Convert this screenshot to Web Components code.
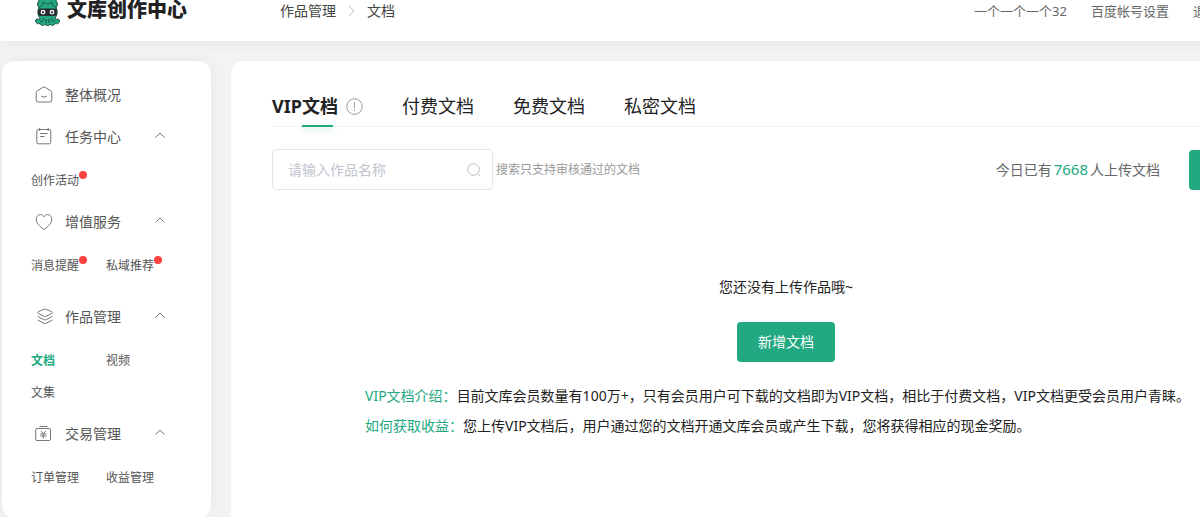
<!DOCTYPE html>
<html lang="zh-CN">
<head>
<meta charset="utf-8">
<meta name="viewport" content="width=device-width, initial-scale=1">
<title>文库创作中心</title>
<style>
  html { scrollbar-width: none; background: #f3f3f3; }
  body {
    margin: 0;
    font: 14px/20px "Noto Sans", "Noto Sans CJK SC", sans-serif;
    color: #555;
    --brand: #22a982;
  }
</style>
</head>
<body>
<studio-page>
  <studio-header slot="header"></studio-header>
  <studio-sidebar slot="side">
    <nav-group label="整体概况" icon="home" flat></nav-group>
    <nav-group label="任务中心" icon="task">
      <nav-item dot>创作活动</nav-item>
    </nav-group>
    <nav-group label="增值服务" icon="heart">
      <nav-item dot>消息提醒</nav-item>
      <nav-item dot>私域推荐</nav-item>
    </nav-group>
    <nav-group label="作品管理" icon="layers" spaced>
      <nav-item active>文档</nav-item>
      <nav-item>视频</nav-item>
      <nav-item>文集</nav-item>
    </nav-group>
    <nav-group label="交易管理" icon="money">
      <nav-item>订单管理</nav-item>
      <nav-item>收益管理</nav-item>
    </nav-group>
  </studio-sidebar>
  <doc-panel>
    <doc-tabs slot="tabs"></doc-tabs>
    <doc-toolbar slot="toolbar"></doc-toolbar>
    <doc-empty></doc-empty>
  </doc-panel>
</studio-page>

<script>
const ICONS = {
  home: '<path d="M1.2 6.4Q1.2 5.4 2.1 4.9L7.9 1.3Q9 .7 10.1 1.3L15.9 4.9Q16.8 5.4 16.8 6.4V14Q16.8 16 14.8 16H3.2Q1.2 16 1.2 14Z"/><path d="M6.2 10Q9 12.4 11.8 10"/>',
  task: '<path d="M4.6 1.5H3.3Q1.8 1.5 1.8 3V14.3Q1.8 15.8 3.3 15.8H14.3Q15.8 15.8 15.8 14.3V3Q15.8 1.5 14.3 1.5H13.2M4.6 1.5H13.2M4.6 0V3M13.2 0V3M5 5.5H12.5M5 8.5H9.5"/>',
  heart: '<path d="M9 16.4C7.2 15.4 1.2 11 1.2 6.3C1.2 3.5 3.1 1.6 5.4 1.6C7 1.6 8.3 2.4 9 3.8C9.7 2.4 11 1.6 12.6 1.6C14.9 1.6 16.8 3.5 16.8 6.3C16.8 11 10.8 15.4 9 16.4Z"/>',
  layers: '<path d="M9.2 1.2Q10 .8 10.8 1.2L16.8 3.8Q18 4.6 16.8 5.4L10.8 8.4Q10 8.8 9.2 8.4L3.2 5.4Q2 4.6 3.2 3.8ZM2.6 8.4L9.2 11.8Q10 12.2 10.8 11.8L17.4 8.4M2.6 12L9.2 15.4Q10 15.8 10.8 15.4L17.4 12"/>',
  money: '<path d="M4.5 1.5H12.5M2 3.5H14.2Q15.5 3.5 15.5 4.8V14.2Q15.5 15.5 14.2 15.5H2Q.7 15.5 .7 14.2V4.8Q.7 3.5 2 3.5Z"/><path d="M5.8 6L8.3 8.8L10.8 6M5.2 9H11.4M5.2 11H11.4M8.3 8.8V13.3"/>'
};

function define(name, html, setup) {
  const template = document.createElement('template');
  template.innerHTML = html;
  customElements.define(name, class extends HTMLElement {
    constructor() {
      super();
      this.attachShadow({ mode: 'open' }).append(template.content.cloneNode(true));
    }
    connectedCallback() { if (setup) setup(this, this.shadowRoot); }
  });
}

define('studio-page', `
<style>
  :host { display: block; min-width: 1343px; }
  .body { display: grid; grid-template-columns: 209px 1fr; gap: 20px; align-items: start; padding: 20px 2px; }
</style>
<slot name="header"></slot>
<div class="body"><slot name="side"></slot><slot></slot></div>`);

define('studio-header', `
<style>
  :host { display: block; position: relative; background: #fff; box-shadow: 0 2px 16px rgba(0,0,0,.06); }
  header { display: flex; align-items: flex-start; min-height: 41px; padding: 0 124px 0 34px; box-sizing: border-box; line-height: 22px; }
  a { color: inherit; text-decoration: none; }
  .logo { display: flex; width: 246px; gap: 6px; color: #222; font-size: 20px; font-weight: 900; line-height: 20px; }
  .crumbs { display: flex; flex: 1; align-items: center; gap: 12px; color: #444; }
  .user { display: flex; gap: 24px; font-size: 13px; color: #666; }
  svg { display: block; }
</style>
<header>
  <a class="logo" href="#">
    <svg width="27" height="26" viewBox="0 0 27 26" aria-hidden="true">
      <path d="M6 -2H21L23.5 4Q24 6 22 7L23 10V14C22 17 21 18 21 19C22 20 24 18 25.4 20C26 23 23 24.6 21 23.4C20 26 17 26 16.4 24C15 26 12 26 10.6 24C10 26 7 26 6 23.4C4 24.6 1 23 1.6 20C3 18 5 20 6 19C6 18 5 17 4 14V10L5 7Q3 6 3.5 4Z" fill="#22a982" stroke="#1c4f45"/>
      <path d="M5 7C8 7 9 4 9 2M22 7C19 7 18 4 18 2M9 2Q13.5 6 18 2M9.4 18C9.4 21 8 22 6 21.4M12 19V23M15 19V23M17.6 18C17.6 21 19 22 21 21.4" fill="none" stroke="#1c4f45"/>
      <rect x="4" y="8.6" width="19" height="7.4" rx="3" fill="#262a2c"/>
      <circle cx="9" cy="12.2" r="1.8" fill="#444" stroke="#fff" stroke-width="1.2"/><circle cx="18" cy="12.2" r="1.8" fill="#444" stroke="#fff" stroke-width="1.2"/>
    </svg>
    <span>文库创作中心</span>
  </a>
  <nav class="crumbs" aria-label="面包屑">
    <a href="#">作品管理</a>
    <svg width="7" height="12" viewBox="0 0 7 12" fill="none" stroke="#bbb"><path d="M1 1L6 6L1 11"/></svg>
    <span>文档</span>
  </nav>
  <nav class="user" aria-label="帐号"><a href="#">一个一个一个32</a><a href="#">百度帐号设置</a><a href="#">退出</a></nav>
</header>`);

define('studio-sidebar', `
<style>
  :host { display: block; box-sizing: border-box; padding: 13px 0 20px; border-radius: 12px; background: #fff; box-shadow: 0 0 12px rgba(0,0,0,.06); }
</style>
<nav aria-label="主导航"><slot></slot></nav>`);

define('nav-group', `
<style>
  :host { display: block; }
  :host([spaced]) { margin-top: 10px; }
  button { display: flex; align-items: center; width: 100%; height: 42px; padding: 0 46px 0 33px; border: 0; background: none; font: inherit; color: #555; cursor: pointer; }
  .label { flex: 1; margin-left: 12px; text-align: left; }
  svg { display: block; fill: none; stroke: #777; }
  .chevron { margin-bottom: 4px; }
  .items { display: grid; grid-template-columns: 75px 75px; padding: 7px 0 4px 29px; }
  :host([flat]) .chevron, :host([flat]) .items { display: none; }
</style>
<button type="button" aria-expanded="true">
  <svg class="icon" width="18" height="18" viewBox="0 0 18 18" aria-hidden="true"></svg>
  <span class="label"></span>
  <svg class="chevron" width="10" height="6" viewBox="0 0 10 6" aria-hidden="true"><path d="M0.5 5.5L5 1L9.5 5.5"/></svg>
</button>
<div class="items"><slot></slot></div>`, (host, root) => {
  root.querySelector('.label').textContent = host.getAttribute('label');
  root.querySelector('.icon').innerHTML = ICONS[host.getAttribute('icon')];
  if (host.hasAttribute('flat')) root.querySelector('button').removeAttribute('aria-expanded');
});

define('nav-item', `
<style>
  :host { display: block; font-size: 12px; line-height: 32px; color: #555; }
  a { position: relative; display: inline-block; color: inherit; text-decoration: none; }
  :host([active]) { color: var(--brand); font-weight: 700; }
  :host([dot]) a::after { content: ""; position: absolute; top: 6px; right: -8px; width: 8px; height: 8px; border-radius: 50%; background: #ff4141; }
</style>
<a href="#"><slot></slot></a>`);

define('doc-panel', `
<style>
  :host { display: block; box-sizing: border-box; min-height: 600px; padding: 25px 41px; border-radius: 12px; background: #fff; }
</style>
<slot name="tabs"></slot><slot name="toolbar"></slot><slot></slot>`);

define('doc-tabs', `
<style>
  :host { display: block; border-bottom: 1px solid #f0f0f0; }
  div { display: flex; gap: 39px; }
  button { position: relative; display: flex; align-items: center; gap: 8px; height: 40px; padding: 0; border: 0; background: none; font: inherit; font-size: 18px; color: #222; cursor: pointer; }
  button[aria-selected=true] { font-weight: 700; }
  button[aria-selected=true]::after { content: ""; position: absolute; bottom: -1px; left: calc(50% - 15px); width: 31px; height: 2px; background: var(--brand); box-shadow: 0 2px 6px rgba(34,169,130,.4); }
</style>
<div role="tablist">
  <button type="button" role="tab" aria-selected="true">VIP文档
    <svg width="17" height="17" viewBox="0 0 17 17" fill="none" stroke="#999" aria-hidden="true"><circle cx="8.5" cy="8.5" r="7.8"/><path d="M8.5 4.2V10M8.5 11.5V13"/></svg>
  </button>
  <button type="button" role="tab" aria-selected="false">付费文档</button>
  <button type="button" role="tab" aria-selected="false">免费文档</button>
  <button type="button" role="tab" aria-selected="false">私密文档</button>
</div>`);

define('doc-toolbar', `
<style>
  :host { display: flex; align-items: center; margin-top: 22px; }
  .field { display: flex; align-items: center; box-sizing: border-box; width: 221px; height: 41px; padding: 0 11px 0 15px; border: 1px solid #e4e5ea; border-radius: 4px; }
  input { flex: 1; min-width: 0; padding: 0; border: 0; outline: 0; background: none; font: inherit; color: #333; }
  input::placeholder { color: #c0c4cc; opacity: 1; }
  .hint { flex: 1; margin-left: 3px; font-size: 12px; color: #999; }
  .count { margin-right: 29px; color: #666; }
  strong { margin: 0 2px; font-size: 15px; font-weight: 400; color: var(--brand); }
  button { width: 111px; height: 40px; border: 0; border-radius: 4px; background: var(--brand); font: inherit; color: #fff; cursor: pointer; }
</style>
<label class="field">
  <input type="text" placeholder="请输入作品名称" aria-label="作品名称">
  <svg width="14" height="14" viewBox="0 0 14 14" fill="none" stroke="#b8bcc5" aria-hidden="true"><circle cx="6.5" cy="6.5" r="5.8"/><path d="M10.8 10.8L13.2 13.2"/></svg>
</label>
<span class="hint">搜索只支持审核通过的文档</span>
<span class="count">今日已有<strong>7668</strong>人上传文档</span>
<button type="button" aria-label="新增文档"></button>`);

define('doc-empty', `
<style>
  :host { display: flex; flex-direction: column; align-items: center; padding-top: 87px; color: #222; }
  p { margin: 0; }
  button { height: 40px; margin: 25px 0 19px; padding: 0 21px; border: 0; border-radius: 4px; background: var(--brand); font: inherit; color: #fff; cursor: pointer; }
  .notes { width: 100%; max-width: 842px; line-height: 30px; }
  .notes span { color: var(--brand); }
</style>
<p>您还没有上传作品哦~</p>
<button type="button">新增文档</button>
<div class="notes">
  <p><span>VIP文档介绍：</span>目前文库会员数量有100万+，只有会员用户可下载的文档即为VIP文档，相比于付费文档，VIP文档更受会员用户青睐。</p>
  <p><span>如何获取收益：</span>您上传VIP文档后，用户通过您的文档开通文库会员或产生下载，您将获得相应的现金奖励。</p>
</div>`);
</script>
</body>
</html>
